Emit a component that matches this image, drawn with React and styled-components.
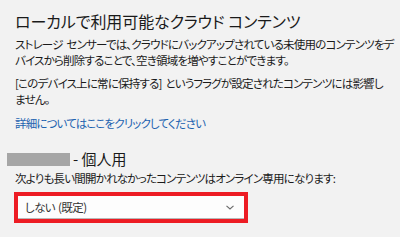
import React from "react";
import styled, { createGlobalStyle } from "styled-components";

const Global = createGlobalStyle`
  html, body { margin: 0; padding: 0; background: #f2f2f2; }
  body {
    font-family: "Noto Sans CJK JP", "Noto Sans", sans-serif;
    font-feature-settings: "palt";
    color: #1a1a1a;
  }
`;

const Page = styled.div`
  width: 400px;
  height: 237px;
  box-sizing: border-box;
  padding: 10px 0 0 15px;
  background: #f2f2f2;
  overflow: hidden;
`;

const Title = styled.h1`
  margin: 0;
  font-size: 16px;
  font-weight: 400;
  line-height: 22px;
  letter-spacing: -0.1px;
  color: #1a1a1a;
  white-space: nowrap;
`;

const Para = styled.p`
  margin: ${(p) => p.$top}px 0 0;
  font-size: 11.5px;
  letter-spacing: -0.8px;
  word-spacing: 2px;
  line-height: 16px;
  color: #1a1a1a;
  white-space: nowrap;
`;

const Link = styled.a`
  display: block;
  margin-top: 8px;
  font-size: 11.5px;
  letter-spacing: -0.85px;
  line-height: 16px;
  color: #1d63b0;
  text-decoration: none;
  cursor: pointer;
`;

const Heading = styled.h2`
  margin: 18px 0 0;
  display: flex;
  align-items: center;
  font-size: 15px;
  font-weight: 400;
  line-height: 20px;
  color: #1a1a1a;
`;

const Redacted = styled.span`
  display: inline-block;
  width: 63px;
  height: 13px;
  margin-left: -8px;
  margin-right: 3px;
  background: #a6a6a6;
`;

const Frame = styled.div`
  margin-top: 6px;
  margin-left: -1px;
  width: 234px;
  height: 31px;
  box-sizing: border-box;
  border: 4px solid #ed1c24;
`;

const Select = styled.div`
  height: 100%;
  box-sizing: border-box;
  display: flex;
  align-items: center;
  justify-content: space-between;
  padding: 0 10px 0 7px;
  background: #fdfdfd;
  border-bottom: 1px solid #b8b8b8;
  font-size: 11.5px;
  letter-spacing: -0.6px;
  word-spacing: 1px;
  color: #333;
`;

const Chevron = () => (
  <svg width="8" height="5" viewBox="0 0 8 5">
    <path d="M0.5 0.8 L4 4 L7.5 0.8" fill="none" stroke="#6a6a6a" strokeWidth="1.1" />
  </svg>
);

export default function App() {
  return (
    <>
      <Global />
      <Page>
        <Title>ローカルで利用可能なクラウド コンテンツ</Title>
        <Para $top={3.5}>
          ストレージ センサーでは、クラウドにバックアップされている未使用のコンテンツをデ
          <br />
          バイスから削除することで、空き領域を増やすことができます。
        </Para>
        <Para $top={7.5}>
          [このデバイス上に常に保持する] というフラグが設定されたコンテンツには影響し
          <br />
          ません。
        </Para>
        <Link>詳細についてはここをクリックしてください</Link>
        <Heading>
          <Redacted />- 個人用
        </Heading>
        <Para $top={1}>次よりも長い間開かれなかったコンテンツはオンライン専用になります:</Para>
        <Frame>
          <Select>
            <span>しない (既定)</span>
            <Chevron />
          </Select>
        </Frame>
      </Page>
    </>
  );
}
